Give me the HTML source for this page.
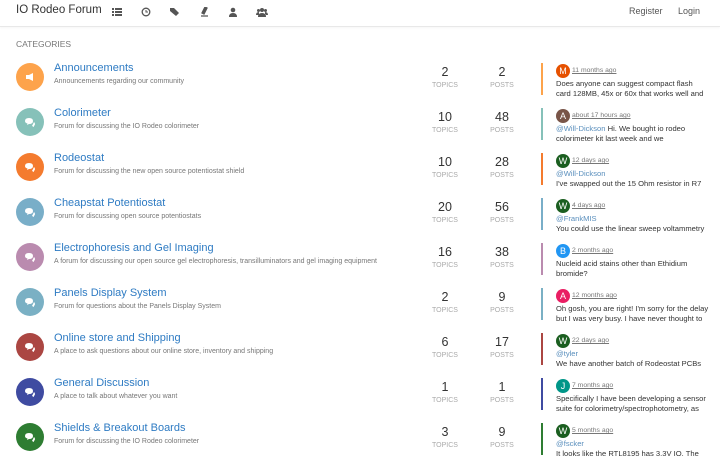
<!DOCTYPE html>
<html><head><meta charset="utf-8"><style>
*{margin:0;padding:0;box-sizing:border-box}
body{width:720px;height:473px;overflow:hidden;background:#fff;font-family:"Liberation Sans",sans-serif;color:#333;position:relative}
.nav{position:absolute;left:0;top:0;width:720px;height:27px;border-bottom:1px solid #e8e8e8;box-shadow:0 1px 2px rgba(0,0,0,.04)}
.brand{position:absolute;left:16px;top:4px;font-size:11.5px;color:#333}
.ic{position:absolute;top:7px;width:10px;height:10px}
.nr{position:absolute;top:6px;font-size:9px;color:#555}
.cat{position:absolute;left:16px;top:39px;font-size:8.5px;color:#777}
.row{position:absolute;left:0;width:720px;height:45px}
.circ{position:absolute;left:16px;top:0;width:28px;height:28px;border-radius:50%}
.circ svg{position:absolute;left:9px;top:9px}
.t{position:absolute;left:54px;top:-1px;font-size:11px;color:#2e7bc3;white-space:nowrap}
.d{position:absolute;left:54px;top:15px;font-size:7px;color:#777;white-space:nowrap}
.n{position:absolute;top:2px;width:50px;text-align:center;font-size:12.5px;color:#333}
.l{position:absolute;top:19px;width:50px;text-align:center;font-size:7px;color:#aaa}
.bar{position:absolute;left:541px;top:0;width:2px;height:32px}
.av{position:absolute;left:556px;top:1px;width:14px;height:14px;border-radius:50%;color:#fff;font-size:9px;text-align:center;line-height:14px}
.ts{position:absolute;left:572px;top:4px;font-size:6.8px;color:#777;text-decoration:underline;white-space:nowrap}
.p{position:absolute;left:556px;top:16px;font-size:7.6px;line-height:10px;color:#333;white-space:nowrap}
.m{color:#5a8fbd}
</style></head><body>
<div class="nav">
<div class="brand">IO Rodeo Forum</div>
<svg class="ic" style="left:112px" viewBox="0 0 10 10"><rect x="0" y="1" width="2" height="2" fill="#555"/><rect x="3" y="1" width="7" height="2" fill="#555"/><rect x="0" y="4" width="2" height="2" fill="#555"/><rect x="3" y="4" width="7" height="2" fill="#555"/><rect x="0" y="7" width="2" height="2" fill="#555"/><rect x="3" y="7" width="7" height="2" fill="#555"/></svg>
<svg class="ic" style="left:141px" viewBox="0 0 10 10"><circle cx="5" cy="5" r="3.8" fill="none" stroke="#555" stroke-width="1.3"/><path d="M5 3v2h2" stroke="#555" fill="none"/></svg>
<svg class="ic" style="left:170px" viewBox="0 0 10 10"><path d="M0 1h4l5 5-3 3-6-5z" fill="#555"/></svg>
<svg class="ic" style="left:199px" viewBox="0 0 10 10"><path d="M6 0L3 6l2 1 3-6zM2 9h7" stroke="#555" stroke-width="1.3" fill="#555"/></svg>
<svg class="ic" style="left:228px" viewBox="0 0 10 10"><circle cx="5" cy="3" r="2.3" fill="#555"/><path d="M1 10q0-4 4-4t4 4z" fill="#555"/></svg>
<svg class="ic" style="left:256px;width:12px" viewBox="0 0 12 10"><circle cx="6" cy="3" r="2" fill="#555"/><circle cx="2.5" cy="3.5" r="1.5" fill="#555"/><circle cx="9.5" cy="3.5" r="1.5" fill="#555"/><path d="M2 10q0-4 4-4t4 4zM0 8q0-3 3-3v3zM12 8q0-3-3-3v3z" fill="#555"/></svg>
<div class="nr" style="left:629px">Register</div>
<div class="nr" style="left:678px">Login</div>
</div>
<div class="cat">CATEGORIES</div>

<div class="row" style="top:63px"><div class="circ" style="background:#fda34b"><svg width="10" height="10" viewBox="0 0 10 10"><path d="M1 3h3l4-2v8l-4-2H1z" fill="#fff"/></svg></div>
<div class="t">Announcements</div><div class="d">Announcements regarding our community</div>
<div class="n" style="left:420px">2</div><div class="l" style="left:420px">TOPICS</div>
<div class="n" style="left:477px">2</div><div class="l" style="left:477px">POSTS</div>
<div class="bar" style="background:#fda34b"></div>
<div class="av" style="background:#e65100">M</div><div class="ts">11 months ago</div>
<div class="p">Does anyone can suggest compact flash<br>card 128MB, 45x or 60x that works well and</div></div>

<div class="row" style="top:108px"><div class="circ" style="background:#86c1b9"><svg width="10" height="10" viewBox="0 0 10 10"><path d="M0 4q0-3 4-3t4 3-4 3L2 8l.5-1.5Q0 6 0 4zM9 5q1 1 1 2t-1 2v1l-2-1" fill="#fff"/></svg></div>
<div class="t">Colorimeter</div><div class="d">Forum for discussing the IO Rodeo colorimeter</div>
<div class="n" style="left:420px">10</div><div class="l" style="left:420px">TOPICS</div>
<div class="n" style="left:477px">48</div><div class="l" style="left:477px">POSTS</div>
<div class="bar" style="background:#86c1b9"></div>
<div class="av" style="background:#795548">A</div><div class="ts">about 17 hours ago</div>
<div class="p"><span class="m">@Will-Dickson</span> Hi. We bought io rodeo<br>colorimeter kit last week and we</div></div>

<div class="row" style="top:153px"><div class="circ" style="background:#f47b2e"><svg width="10" height="10" viewBox="0 0 10 10"><path d="M0 4q0-3 4-3t4 3-4 3L2 8l.5-1.5Q0 6 0 4zM9 5q1 1 1 2t-1 2v1l-2-1" fill="#fff"/></svg></div>
<div class="t">Rodeostat</div><div class="d">Forum for discussing the new open source potentiostat shield</div>
<div class="n" style="left:420px">10</div><div class="l" style="left:420px">TOPICS</div>
<div class="n" style="left:477px">28</div><div class="l" style="left:477px">POSTS</div>
<div class="bar" style="background:#f47b2e"></div>
<div class="av" style="background:#1b5e20">W</div><div class="ts">12 days ago</div>
<div class="p"><span class="m">@Will-Dickson</span><br>I've swapped out the 15 Ohm resistor in R7</div></div>

<div class="row" style="top:198px"><div class="circ" style="background:#79aec8"><svg width="10" height="10" viewBox="0 0 10 10"><path d="M0 4q0-3 4-3t4 3-4 3L2 8l.5-1.5Q0 6 0 4zM9 5q1 1 1 2t-1 2v1l-2-1" fill="#fff"/></svg></div>
<div class="t">Cheapstat Potentiostat</div><div class="d">Forum for discussing open source potentiostats</div>
<div class="n" style="left:420px">20</div><div class="l" style="left:420px">TOPICS</div>
<div class="n" style="left:477px">56</div><div class="l" style="left:477px">POSTS</div>
<div class="bar" style="background:#79aec8"></div>
<div class="av" style="background:#1b5e20">W</div><div class="ts">4 days ago</div>
<div class="p"><span class="m">@FrankMIS</span><br>You could use the linear sweep voltammetry</div></div>

<div class="row" style="top:243px"><div class="circ" style="background:#ba8baf"><svg width="10" height="10" viewBox="0 0 10 10"><path d="M0 4q0-3 4-3t4 3-4 3L2 8l.5-1.5Q0 6 0 4zM9 5q1 1 1 2t-1 2v1l-2-1" fill="#fff"/></svg></div>
<div class="t">Electrophoresis and Gel Imaging</div><div class="d">A forum for discussing our open source gel electrophoresis, transilluminators and gel imaging equipment</div>
<div class="n" style="left:420px">16</div><div class="l" style="left:420px">TOPICS</div>
<div class="n" style="left:477px">38</div><div class="l" style="left:477px">POSTS</div>
<div class="bar" style="background:#ba8baf"></div>
<div class="av" style="background:#2196f3">B</div><div class="ts">2 months ago</div>
<div class="p">Nucleid acid stains other than Ethidium<br>bromide?</div></div>

<div class="row" style="top:288px"><div class="circ" style="background:#7ab0c4"><svg width="10" height="10" viewBox="0 0 10 10"><path d="M0 4q0-3 4-3t4 3-4 3L2 8l.5-1.5Q0 6 0 4zM9 5q1 1 1 2t-1 2v1l-2-1" fill="#fff"/></svg></div>
<div class="t">Panels Display System</div><div class="d">Forum for questions about the Panels Display System</div>
<div class="n" style="left:420px">2</div><div class="l" style="left:420px">TOPICS</div>
<div class="n" style="left:477px">9</div><div class="l" style="left:477px">POSTS</div>
<div class="bar" style="background:#7ab0c4"></div>
<div class="av" style="background:#e91e63">A</div><div class="ts">12 months ago</div>
<div class="p">Oh gosh, you are right! I'm sorry for the delay<br>but I was very busy. I have never thought to</div></div>

<div class="row" style="top:333px"><div class="circ" style="background:#ab4642"><svg width="10" height="10" viewBox="0 0 10 10"><path d="M0 4q0-3 4-3t4 3-4 3L2 8l.5-1.5Q0 6 0 4zM9 5q1 1 1 2t-1 2v1l-2-1" fill="#fff"/></svg></div>
<div class="t">Online store and Shipping</div><div class="d">A place to ask questions about our online store, inventory and shipping</div>
<div class="n" style="left:420px">6</div><div class="l" style="left:420px">TOPICS</div>
<div class="n" style="left:477px">17</div><div class="l" style="left:477px">POSTS</div>
<div class="bar" style="background:#ab4642"></div>
<div class="av" style="background:#1b5e20">W</div><div class="ts">22 days ago</div>
<div class="p"><span class="m">@tyler</span><br>We have another batch of Rodeostat PCBs</div></div>

<div class="row" style="top:378px"><div class="circ" style="background:#3f4ba1"><svg width="10" height="10" viewBox="0 0 10 10"><path d="M0 4q0-3 4-3t4 3-4 3L2 8l.5-1.5Q0 6 0 4zM9 5q1 1 1 2t-1 2v1l-2-1" fill="#fff"/></svg></div>
<div class="t">General Discussion</div><div class="d">A place to talk about whatever you want</div>
<div class="n" style="left:420px">1</div><div class="l" style="left:420px">TOPICS</div>
<div class="n" style="left:477px">1</div><div class="l" style="left:477px">POSTS</div>
<div class="bar" style="background:#3f4ba1"></div>
<div class="av" style="background:#009688">J</div><div class="ts">7 months ago</div>
<div class="p">Specifically I have been developing a sensor<br>suite for colorimetry/spectrophotometry, as</div></div>

<div class="row" style="top:423px"><div class="circ" style="background:#2e7d32"><svg width="10" height="10" viewBox="0 0 10 10"><path d="M0 4q0-3 4-3t4 3-4 3L2 8l.5-1.5Q0 6 0 4zM9 5q1 1 1 2t-1 2v1l-2-1" fill="#fff"/></svg></div>
<div class="t">Shields &amp; Breakout Boards</div><div class="d">Forum for discussing the IO Rodeo colorimeter</div>
<div class="n" style="left:420px">3</div><div class="l" style="left:420px">TOPICS</div>
<div class="n" style="left:477px">9</div><div class="l" style="left:477px">POSTS</div>
<div class="bar" style="background:#2e7d32"></div>
<div class="av" style="background:#1b5e20">W</div><div class="ts">5 months ago</div>
<div class="p"><span class="m">@fscker</span><br>It looks like the RTL8195 has 3.3V IO. The</div></div>
</body></html>
